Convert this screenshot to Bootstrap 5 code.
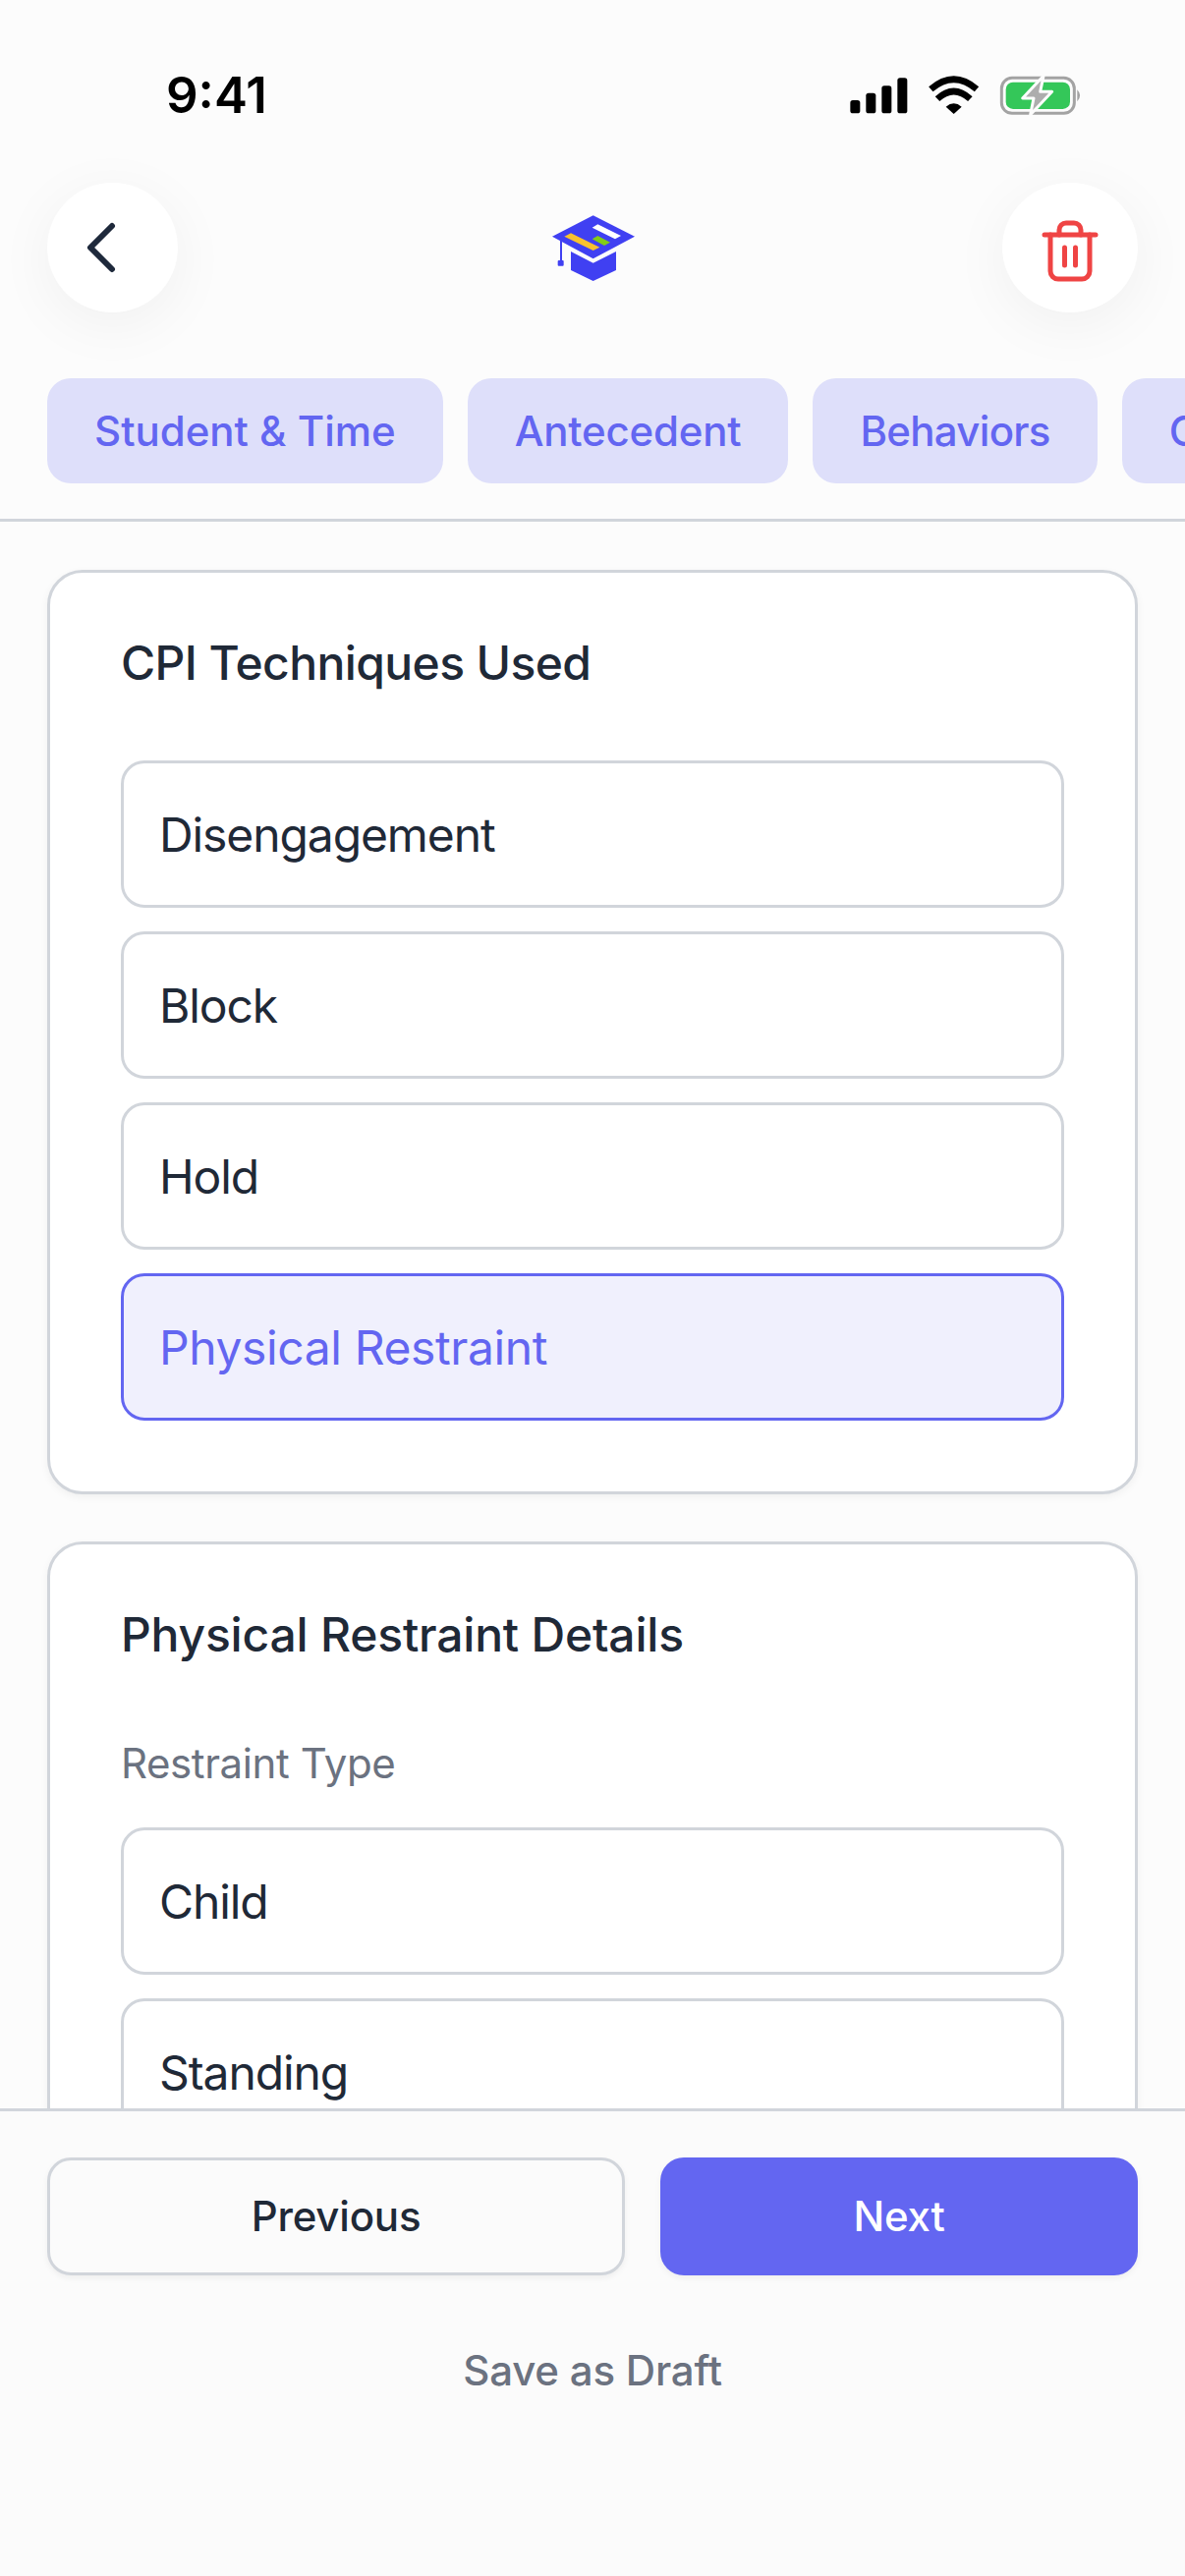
<!DOCTYPE html>
<html lang="en">
<head>
    <meta charset="UTF-8">
    <meta name="viewport" content="width=device-width, initial-scale=1.0">
    <title>CPI Techniques</title>
    <link href="https://cdn.jsdelivr.net/npm/bootstrap@5.3.3/dist/css/bootstrap.min.css" rel="stylesheet" crossorigin="anonymous">
    <style>
        html, body { height: 2622px; }
        body { background: #fcfcfc; font-family: Inter, "Liberation Sans", sans-serif; color: #1f2937; }
        .status-row { height: 186px; padding: 66px 48px 0 169px; }
        .status-time { font-size: 51px; font-weight: 600; line-height: 62px; color: #000; }
        .status-icons { width: 300px; height: 100px; margin: -16px 38px 0 0; }
        .head-row { height: 132px; padding: 0 48px; }
        .round-btn { height: 132px; background: #fff; border: 0; border-radius: 50%; box-shadow: 0 12px 60px rgba(0, 0, 0, .05); padding: 0; }
        .round-back { width: 133px; }
        .round-back svg { margin-right: 24px; }
        .round-trash { width: 138px; }
        .round-trash svg { margin-top: 7px; }
        .logo-img { width: 140px; height: 100px; margin-top: 14px; }
        .tab-strip { margin-top: 67px; padding: 0 0 36px 48px; gap: 25px; border-bottom: 3px solid #d1d5db; overflow: hidden; }
        .tab-pill { background: #dedffa; color: #6366f1; font-size: 42px; font-weight: 500; line-height: 107px; height: 107px; padding: 0 48px; border-radius: 24px; white-space: nowrap; flex-shrink: 0; }
        .tab-second { letter-spacing: -.2px; }
        .tab-third { letter-spacing: -.7px; }
        .form-area { padding: 49px 48px 0; overflow: hidden; min-height: 0; }
        .form-panel { border: 3px solid #d1d5db; border-radius: 36px; padding: 75px 72px 72px; margin-bottom: 48px; box-shadow: 0 3px 9px rgba(0, 0, 0, .05); flex-shrink: 0; }
        .panel-title { font-size: 48px; font-weight: 550; line-height: 60px; color: #1f2937; margin: -13px 0 69px; letter-spacing: -.6px; }
        .panel-title-sub { margin-bottom: 74px; letter-spacing: -.2px; }
        .panel-label { font-size: 42px; line-height: 54px; color: #6b7280; margin: 0 0 38px; letter-spacing: -.4px; }
        .option-list { gap: 24px; }
        .option-box { height: 150px; border: 3px solid #d1d5db; border-radius: 24px; padding: 0 36px; font-size: 48px; font-weight: 380; line-height: 146px; color: #1f2937; background: #fff; letter-spacing: -1.1px; flex-shrink: 0; }
        .option-on { background: #f0f0fd; border-color: #6366f1; color: #6366f1; font-weight: 420; letter-spacing: -.4px; }
        .foot-bar { height: 476px; flex-shrink: 0; border-top: 3px solid #d1d5db; background: #fbfbfb; padding: 47px 48px 0; }
        .foot-btn { height: 120px; border-radius: 24px; font-size: 42px; font-weight: 500; line-height: 1; box-shadow: 0 3px 6px rgba(0, 0, 0, .05); letter-spacing: -.2px; }
        .foot-prev { width: 588px; background: #fbfbfb; border: 3px solid #d1d5db; color: #1f2937; }
        .foot-next { width: 486px; background: #6366f1; border: 0; color: #fff; }
        .foot-draft { font-size: 42px; font-weight: 500; color: #6b7280; line-height: 54px; margin-top: 70px; letter-spacing: -.2px; }
    </style>
</head>
<body class="d-flex flex-column overflow-hidden">
    <div class="status-row d-flex justify-content-between align-items-start flex-shrink-0">
        <span class="status-time">9:41</span>
        <svg class="status-icons" viewBox="0 0 900 300">
            <rect x="136" y="156" width="30" height="40" rx="8"/>
            <rect x="184" y="134" width="30" height="62" rx="8"/>
            <rect x="232" y="112" width="30" height="84" rx="8"/>
            <rect x="280" y="88" width="30" height="108" rx="8"/>
            <path d="M452 198 L428 176 Q452 156 476 176 Z"/>
            <path d="M402 152 Q452 106 502 152" fill="none" stroke="#000" stroke-width="20"/>
            <path d="M382 122 Q452 62 522 122" fill="none" stroke="#000" stroke-width="20"/>
            <rect x="598" y="88" width="222" height="108" rx="32" fill="none" stroke="#a3a3a3" stroke-width="9"/>
            <rect x="611" y="101" width="196" height="82" rx="22" fill="#34c759"/>
            <path d="M829 124 Q846 142 829 160 Z" fill="#a3a3a3"/>
            <path d="M726 82 L662 150 L696 150 L686 200 L752 130 L716 130 Z" fill="#adadad" stroke="#fcfcfc" stroke-width="9" stroke-linejoin="round"/>
        </svg>
    </div>

    <div class="head-row d-flex justify-content-between align-items-start flex-shrink-0">
        <button class="round-btn round-back d-flex align-items-center justify-content-center" type="button">
            <svg width="40" height="60" viewBox="0 0 40 60"><path d="M31 8 L9 30 L31 52" fill="none" stroke="#1e293b" stroke-width="6" stroke-linecap="round" stroke-linejoin="round"/></svg>
        </button>
        <svg class="logo-img" viewBox="0 0 420 300">
            <path d="M218 58 L345 122 L218 190 L93 122 Z" fill="#4040f2"/>
            <path d="M150 168 L218 203 L288 168 L288 225 L218 258 L150 225 Z" fill="#4040f2"/>
            <path d="M120 130 L120 198" stroke="#4040f2" stroke-width="6"/>
            <rect x="110" y="195" width="18" height="17" rx="3" fill="#4040f2"/>
            <path d="M130 122 L150 112 L238 155 L218 165 Z" fill="#f9c22e"/>
            <path d="M215 95 L232 85 L303 120 L285 130 Z" fill="#fff"/>
            <path d="M215 130 L232 120 L270 140 L252 150 Z" fill="#84cc16"/>
        </svg>
        <button class="round-btn round-trash d-flex align-items-center justify-content-center" type="button">
            <svg width="60" height="66" viewBox="0 0 60 66" fill="none" stroke="#ef4444" stroke-width="5" stroke-linecap="round" stroke-linejoin="round">
                <path d="M4 16 H56"/>
                <path d="M10 16 V53 a8 8 0 0 0 8 8 H42 a8 8 0 0 0 8 -8 V16"/>
                <path d="M19 16 V11 a7 7 0 0 1 7 -7 H34 a7 7 0 0 1 7 7 V16"/>
                <path d="M24.5 29 V47 M35.5 29 V47"/>
            </svg>
        </button>
    </div>

    <div class="tab-strip d-flex flex-shrink-0">
        <span class="tab-pill">Student &amp; Time</span>
        <span class="tab-pill tab-second">Antecedent</span>
        <span class="tab-pill tab-third">Behaviors</span>
        <span class="tab-pill">Consequence</span>
    </div>

    <div class="form-area flex-grow-1 d-flex flex-column">
        <div class="form-panel card">
            <h2 class="panel-title">CPI Techniques Used</h2>
            <div class="option-list d-flex flex-column">
                <div class="option-box">Disengagement</div>
                <div class="option-box">Block</div>
                <div class="option-box">Hold</div>
                <div class="option-box option-on">Physical Restraint</div>
            </div>
        </div>
        <div class="form-panel card">
            <h2 class="panel-title panel-title-sub">Physical Restraint Details</h2>
            <div class="panel-label">Restraint Type</div>
            <div class="option-list d-flex flex-column">
                <div class="option-box">Child</div>
                <div class="option-box">Standing</div>
                <div class="option-box">Seated</div>
            </div>
        </div>
    </div>

    <div class="foot-bar">
        <div class="d-flex justify-content-between">
            <button class="foot-btn foot-prev btn" type="button">Previous</button>
            <button class="foot-btn foot-next btn" type="button">Next</button>
        </div>
        <div class="foot-draft text-center">Save as Draft</div>
    </div>
    <script src="https://cdn.jsdelivr.net/npm/bootstrap@5.3.3/dist/js/bootstrap.bundle.min.js" crossorigin="anonymous"></script>
</body>
</html>
